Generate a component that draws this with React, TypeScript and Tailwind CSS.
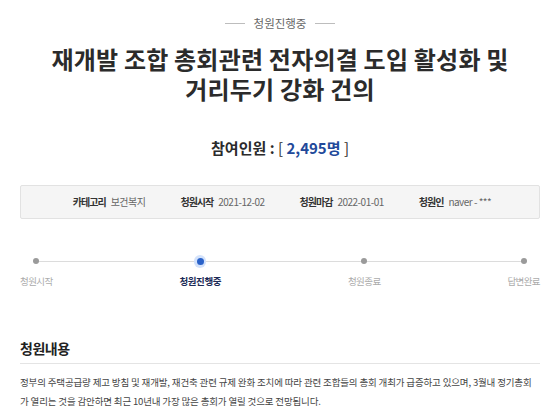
import React from 'react';

const infoItems = [
  { label: '카테고리', value: '보건복지' },
  { label: '청원시작', value: '2021-12-02' },
  { label: '청원마감', value: '2022-01-01' },
  { label: '청원인', value: 'naver - ***' },
];

const steps = [
  { label: '청원시작', active: false },
  { label: '청원진행중', active: true },
  { label: '청원종료', active: false },
  { label: '답변완료', active: false },
];

const App = () => {
  return (
    <div className="w-[560px] h-[417px] overflow-hidden bg-white px-5 font-['Noto_Sans_CJK_KR','Noto_Sans',sans-serif] text-[#333]">
      {/* 상태 라벨 */}
      <div className="flex h-[46px] items-center justify-center gap-[9px]">
        <span className="h-px w-[20px] bg-[#bdbdbd]" />
        <span className="text-[11.5px] leading-[16px] text-[#666]">청원진행중</span>
        <span className="h-px w-[20px] bg-[#bdbdbd]" />
      </div>

      {/* 제목 */}
      <h2 className="-mt-[2px] text-center text-[24px] leading-[30px] font-bold tracking-[0.2px] text-[#2b2b2b]">
        재개발 조합 총회관련 전자의결 도입 활성화 및
        <br />
        거리두기 강화 건의
      </h2>

      {/* 참여인원 */}
      <div className="mt-[34px] text-center text-[15px] leading-[20px] font-bold text-[#2b2b2b]">
        참여인원 : <span className="font-normal">[</span>{' '}
        <span className="text-[#22499a]">2,495명</span> <span className="font-normal">]</span>
      </div>

      {/* 정보 박스 */}
      <div className="mt-[27px] flex h-[34px] items-center justify-center gap-[35px] rounded-[2px] border border-[#e2e2e2] bg-[#f5f5f5] pl-[4px]">
        {infoItems.map((item) => (
          <div key={item.label} className="flex items-center gap-[5px] text-[10px] leading-[14px]">
            <span className="font-bold tracking-[-1px] text-[#333]">{item.label}</span>
            <span className="tracking-[-0.5px] text-[#666]">{item.value}</span>
          </div>
        ))}
      </div>

      {/* 진행 단계 */}
      <div className="relative mt-[36px] flex justify-between">
        <div className="absolute left-[18px] right-[17px] top-[6px] h-px bg-[#dcdcdc]" />
        {steps.map((step) => (
          <div key={step.label} className="relative flex flex-col items-center">
            <div className="flex h-[12px] w-[12px] items-center justify-center">
              {step.active ? (
                <span className="flex h-[13px] w-[13px] items-center justify-center rounded-full bg-[#d3e2fb]">
                  <span className="h-[7px] w-[7px] rounded-full bg-[#2a62c9]" />
                </span>
              ) : (
                <span className="h-[6px] w-[6px] rounded-full bg-[#9a9a9a]" />
              )}
            </div>
            <span
              className={
                step.active
                  ? 'mt-[7px] text-[9.5px] leading-[14px] font-bold tracking-[-0.4px] text-[#1d2b57]'
                  : 'mt-[7px] text-[9.5px] leading-[14px] tracking-[-0.6px] text-[#ababab]'
              }
            >
              {step.label}
            </span>
          </div>
        ))}
      </div>

      {/* 청원내용 */}
      <h3 className="mt-[50px] text-[14px] leading-[20px] font-bold tracking-[-0.5px] text-[#222]">청원내용</h3>
      <div className="mt-[5px] h-px bg-[#e4e4e4]" />
      <p className="mt-[9px] text-[9.5px] leading-[19px] tracking-[-0.15px] text-[#444]">
        정부의 주택공급량 제고 방침 및 재개발, 재건축 관련 규제 완화 조치에 따라 관련 조합들의 총회 개최가 급증하고 있으며, 3월내 정기총회
        <br />
        가 열리는 것을 감안하면 최근 10년내 가장 많은 총회가 열릴 것으로 전망됩니다.
      </p>
    </div>
  );
};

export default App;
